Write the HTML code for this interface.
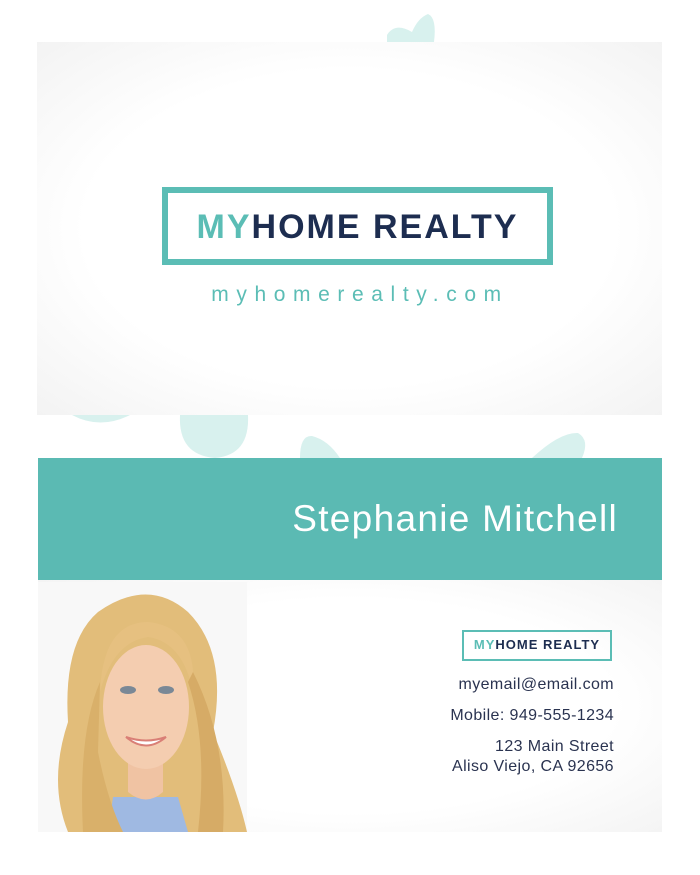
<!DOCTYPE html>
<html><head><style>
*{margin:0;padding:0;box-sizing:border-box}
body{width:700px;height:875px;background:#fff;position:relative;overflow:hidden;font-family:"Liberation Sans",sans-serif}
.abs{position:absolute}
.c{position:absolute;left:300px;width:314px;text-align:right;font-size:16px;letter-spacing:0.4px;color:#2a3350;line-height:20px}
</style></head><body>
<svg class="abs" style="left:0;top:0" width="700" height="875">
<g fill="#d8f1ee">
<path d="M387 35 Q395 22 412 32 Q418 18 428 14 Q437 18 434 42 L387 42Z"/>
<path d="M72 415 Q100 430 130 415Z"/>
<path d="M180 415 Q178 455 215 458 Q250 455 248 415Z"/>
<path d="M300 458 Q300 435 312 436 Q328 440 340 458Z"/>
<path d="M532 458 Q560 432 578 433 Q590 440 582 458Z"/>
</g>
</svg>
<div class="abs" style="left:37px;top:42px;width:625px;height:373px;background:radial-gradient(ellipse at center,#fff 60%,#f3f3f3 100%)"></div>
<div class="abs" style="left:162px;top:187px;width:391px;height:78px;border:6px solid #5bbdb5;background:#fff;text-align:center;line-height:68px;font-size:34px;font-weight:bold;letter-spacing:2px;color:#1d2d50"><span style="color:#5bbdb5">MY</span>HOME REALTY</div>
<div class="abs" style="left:150px;top:283px;width:420px;text-align:center;font-size:21px;letter-spacing:7.6px;color:#5bbdb5">myhomerealty.com</div>

<div class="abs" style="left:38px;top:458px;width:624px;height:122px;background:#5bbab3"></div>
<div class="abs" style="left:38px;top:498px;width:580px;text-align:right;font-size:37px;letter-spacing:1.3px;color:#fff">Stephanie Mitchell</div>

<div class="abs" style="left:38px;top:580px;width:624px;height:252px;background:radial-gradient(ellipse at center,#fff 60%,#f4f4f4 100%)"></div>
<svg class="abs" style="left:38px;top:582px" width="209" height="250">
<rect width="209" height="250" fill="#f8f8f8"/>
<path d="M30 250 Q10 200 30 140 Q25 60 60 30 Q110 -5 150 30 Q190 70 175 150 Q200 210 209 250Z" fill="#e2bd7a"/>
<path d="M70 250 L75 215 L140 215 L150 250Z" fill="#9fb9e2"/>
<path d="M90 210 L90 180 L125 180 L125 210 Q108 225 90 210Z" fill="#f0c3a3"/>
<ellipse cx="108" cy="125" rx="43" ry="62" fill="#f4cdb0"/>
<path d="M62 110 Q65 40 110 40 Q160 45 155 110 Q145 60 110 55 Q75 60 62 110Z" fill="#e6c080"/>
<path d="M45 250 Q40 150 62 100 L60 170 Q70 220 85 250Z" fill="#d9b06a"/>
<path d="M150 100 Q170 160 160 250 L185 250 Q190 160 155 90Z" fill="#d6ab66"/>
<ellipse cx="90" cy="108" rx="8" ry="4" fill="#7a8896"/>
<ellipse cx="128" cy="108" rx="8" ry="4" fill="#7a8896"/>
<path d="M88 155 Q108 172 128 155 Q108 162 88 155Z" fill="#fff" stroke="#d97f76" stroke-width="2"/>
</svg>
<div class="abs" style="left:462px;top:630px;width:150px;height:31px;border:2.5px solid #5bbdb5;text-align:center;line-height:26px;font-size:13px;font-weight:bold;letter-spacing:1px;color:#1d2d50"><span style="color:#5bbdb5">MY</span>HOME REALTY</div>
<div class="c" style="top:675px">myemail@email.com</div>
<div class="c" style="top:706px">Mobile: 949-555-1234</div>
<div class="c" style="top:737px">123 Main Street<br>Aliso Viejo, CA 92656</div>
</body></html>
